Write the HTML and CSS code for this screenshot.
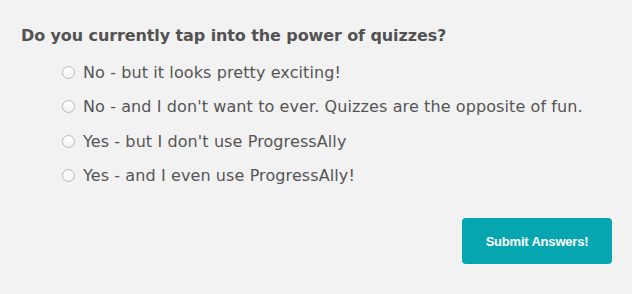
FILE: index.html
```html
<!DOCTYPE html>
<html>
<head>
<meta charset="utf-8">
<link rel="stylesheet" href="styles.css">
</head>
<body>
<form class="quiz">
  <h2 class="question">Do you currently tap into the power of quizzes?</h2>
  <ul class="options">
    <li class="option"><span class="radio"></span><span class="label">No - but it looks pretty exciting!</span></li>
    <li class="option"><span class="radio"></span><span class="label">No - and I don't want to ever. Quizzes are the opposite of fun.</span></li>
    <li class="option"><span class="radio"></span><span class="label">Yes - but I don't use ProgressAlly</span></li>
    <li class="option"><span class="radio"></span><span class="label">Yes - and I even use ProgressAlly!</span></li>
  </ul>
  <div class="actions">
    <button type="button" class="submit">Submit Answers!</button>
  </div>
</form>
</body>
</html>
```
FILE: styles.css
```css
html, body {
  margin: 0;
  padding: 0;
  background: #f2f2f2;
}
body {
  width: 632px;
  height: 294px;
  overflow: hidden;
}
.quiz {
  padding: 26px 20px 0 21px;
  font-family: "DejaVu Sans", Verdana, sans-serif;
  color: #555555;
}
.question {
  margin: 0;
  font-size: 16px;
  font-weight: bold;
  line-height: 20px;
  letter-spacing: -0.1px;
  color: #525252;
}
.options {
  list-style: none;
  margin: 9px 0 0 0;
  padding: 0 0 0 41px;
}
.option {
  display: flex;
  align-items: center;
  height: 34.5px;
  font-size: 16px;
  letter-spacing: 0.1px;
}
.radio {
  width: 11px;
  height: 11px;
  border: 1px solid #b8b8b8;
  border-radius: 50%;
  background: linear-gradient(#ffffff, #f3f3f3);
  margin-right: 8px;
  flex: none;
}
.actions {
  display: flex;
  justify-content: flex-end;
  margin-top: 25px;
}
.submit {
  width: 150px;
  height: 46px;
  border: none;
  border-radius: 4px;
  background: #05a6b0;
  color: #ffffff;
  font-family: "Liberation Sans", Arial, sans-serif;
  font-weight: bold;
  font-size: 13px;
  letter-spacing: -0.2px;
}
```
